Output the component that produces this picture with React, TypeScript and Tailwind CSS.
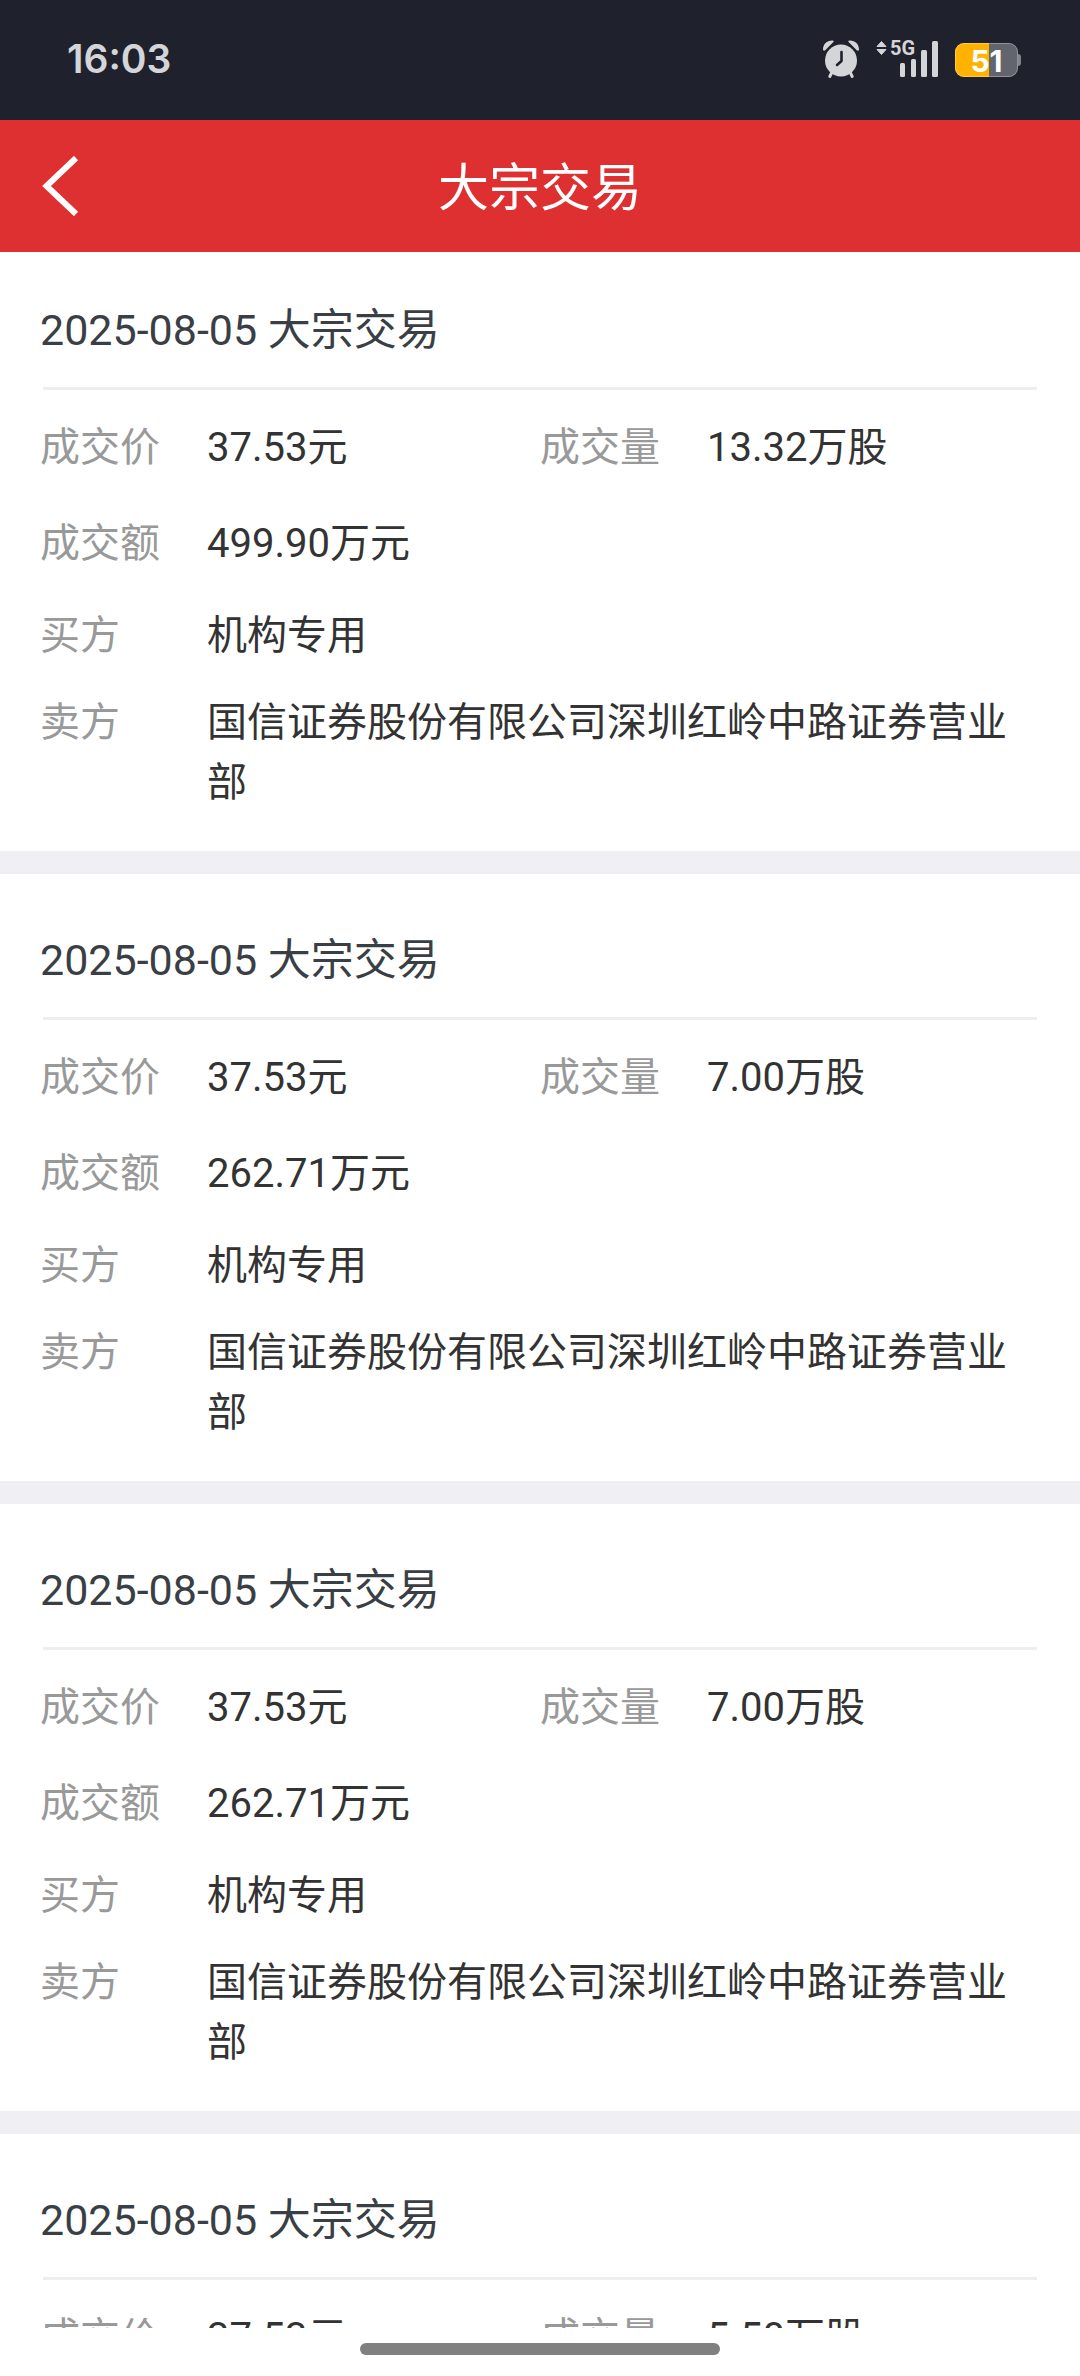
import { useState } from "react";

type Trade = {
  id: number;
  date: string;
  price: string;
  volume: string;
  amount: string;
  buyer: string;
  seller: string;
};

const SELLER = "国信证券股份有限公司深圳红岭中路证券营业部";

const trades: Trade[] = [
  { id: 1, date: "2025-08-05", price: "37.53元", volume: "13.32万股", amount: "499.90万元", buyer: "机构专用", seller: SELLER },
  { id: 2, date: "2025-08-05", price: "37.53元", volume: "7.00万股", amount: "262.71万元", buyer: "机构专用", seller: SELLER },
  { id: 3, date: "2025-08-05", price: "37.53元", volume: "7.00万股", amount: "262.71万元", buyer: "机构专用", seller: SELLER },
  { id: 4, date: "2025-08-05", price: "37.53元", volume: "5.50万股", amount: "206.42万元", buyer: "机构专用", seller: SELLER },
];

function AlarmIcon() {
  return (
    <svg width="38" height="40" viewBox="0 0 38 40" aria-label="闹钟">
      <g fill="#d4d5d8">
        <path d="M1 9.500C1 4 5 .2 10.500.4c1.200 0 1.600 1 .9 1.700L3.200 10.200c-.8.8-2.200.6-2.200-.7z" />
        <path d="M37 9.500C37 4 33 .2 27.500.4c-1.200 0-1.600 1-.9 1.700l8.200 8.100c.8.8 2.200.6 2.200-.7z" />
        <circle cx="19" cy="20.500" r="16" />
      </g>
      <g stroke="#d4d5d8" strokeWidth="3" strokeLinecap="round">
        <path d="M10 32 7.800 36.500M28 32l2.200 4.500" />
      </g>
      <path
        d="M19.500 12v9L15 25"
        fill="none"
        stroke="#1f222c"
        strokeWidth="2.600"
        strokeLinecap="round"
        strokeLinejoin="round"
      />
    </svg>
  );
}

function SignalIcon() {
  return (
    <svg width="62" height="52" viewBox="0 -6 62 52" fill="#d4d5d8" aria-label="5G 信号">
      <path d="M5.500 1.500 10 6.500H1z" stroke="#d4d5d8" strokeLinejoin="round" />
      <path d="M5.500 14.500 10 9.500H1z" stroke="#d4d5d8" strokeLinejoin="round" />
      <text x="14" y="15" fontSize="20" fontWeight="700" fontFamily="Roboto, sans-serif">
        5G
      </text>
      <rect x="24" y="23" width="5" height="14" rx="1.500" />
      <rect x="35" y="19" width="5" height="18" rx="1.500" />
      <rect x="45" y="10" width="6" height="27" rx="1.500" />
      <rect x="56" y="1" width="6" height="36" rx="1.500" />
    </svg>
  );
}

function Battery({ level }: { level: number }) {
  return (
    <div className="flex items-center">
      <div className="relative h-[34px] w-[63px] rounded-[9px] bg-[#62656d]">
        <div className="h-full rounded-l-[9px] bg-[#ffb300]" style={{ width: `${level + 3}%` }} />
        <div className="absolute inset-0 rounded-[9px] border border-white/30" />
        <span className="absolute inset-0 text-center font-[Inter,sans-serif] text-[30px] leading-[36px] font-bold text-white">
          {level}
        </span>
      </div>
      <div className="h-3 w-[3px] rounded-r-[3px] bg-[#82848b]" />
    </div>
  );
}

function StatusBar() {
  return (
    <div className="flex h-[120px] shrink-0 items-center justify-between bg-[#1f222c] pr-[59px] pl-[67px]">
      <span className="pb-[2px] font-[Inter,sans-serif] text-[39px] leading-[48px] font-semibold text-[#d4d5d8]">16:03</span>
      <div className="flex items-center">
        <AlarmIcon />
        <div className="ml-4">
          <SignalIcon />
        </div>
        <div className="ml-[17px]">
          <Battery level={51} />
        </div>
      </div>
    </div>
  );
}

function Field({ label, value }: { label: string; value: string }) {
  return (
    <div className="flex flex-1">
      <dt className="w-[167px] shrink-0 text-[#999999]">{label}</dt>
      <dd className="flex-1 text-[#333333]">{value}</dd>
    </div>
  );
}

function TradeCard({ trade }: { trade: Trade }) {
  return (
    <article className="border-b-[23px] border-[#f0eff4] pt-14 pb-[38px] first:pt-12">
      <h2 className="px-10 pb-[27px] text-[43px] leading-[60px] text-[#3a3f45]">
        {trade.date} 大宗交易
      </h2>
      <hr className="mx-[43px] border-t-[3px] border-[#eeeeee]" />
      <dl className="flex flex-col px-10 pt-7 text-[40px] leading-[60px]">
        <div className="mb-9 flex">
          <Field label="成交价" value={trade.price} />
          <Field label="成交量" value={trade.volume} />
        </div>
        <div className="mb-8 flex">
          <Field label="成交额" value={trade.amount} />
        </div>
        <div className="mb-[27px] flex">
          <Field label="买方" value={trade.buyer} />
        </div>
        <div className="flex pr-5">
          <Field label="卖方" value={trade.seller} />
        </div>
      </dl>
    </article>
  );
}

export default function App() {
  const [items] = useState<Trade[]>(trades);

  return (
    <div className="flex h-screen flex-col bg-white font-[Roboto,'Noto_Sans_CJK_SC',sans-serif]" lang="zh-CN">
      <StatusBar />
      <header className="grid h-[132px] shrink-0 grid-cols-[120px_1fr_120px] items-center bg-[#df3031] text-white">
        <button type="button" aria-label="返回" className="flex h-full items-center pl-[42px]" onClick={() => window.history.back()}>
          <svg width="37" height="60" viewBox="0 0 37 60" fill="none" stroke="currentColor" strokeWidth="6">
            <path d="M34 2 4.500 30 34 58" />
          </svg>
        </button>
        <h1 className="pt-[5px] text-center text-[51px] leading-[72px]">大宗交易</h1>
      </header>

      <main className="min-h-0 flex-1 overflow-y-auto [scrollbar-width:none]">
        {items.map((trade) => (
          <TradeCard key={trade.id} trade={trade} />
        ))}
      </main>

      <footer className="flex h-12 shrink-0 justify-center bg-white pt-[15px]">
        <div className="h-3 w-1/3 rounded-full bg-[#808080]" />
      </footer>
    </div>
  );
}
